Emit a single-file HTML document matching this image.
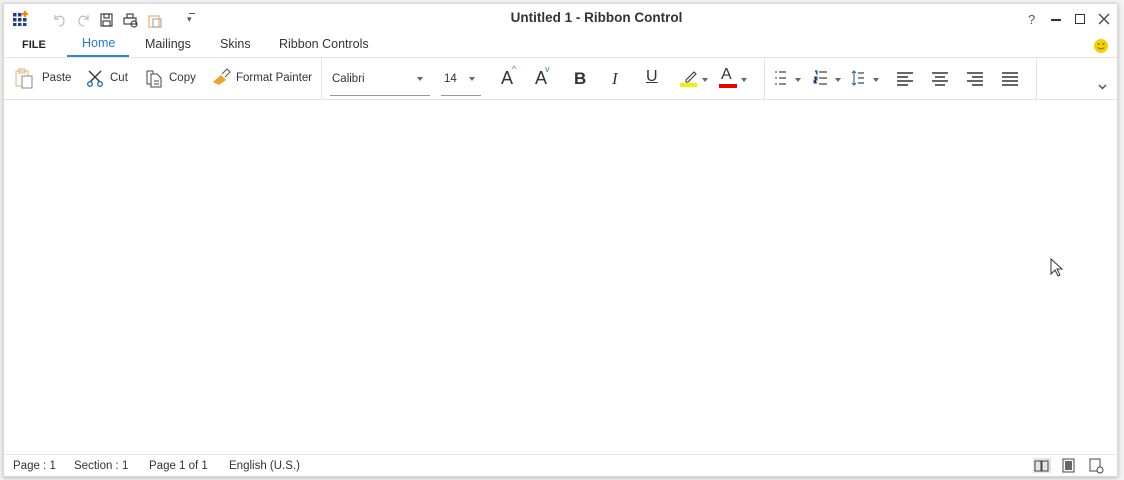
<!DOCTYPE html>
<html><head><style>
*{margin:0;padding:0;box-sizing:border-box}
body{width:1124px;height:480px;background:#f3f3f3;font-family:"Liberation Sans",sans-serif;font-size:11.5px;color:#333;position:relative;overflow:hidden}
.win{position:absolute;left:3px;top:3px;width:1115px;height:474px;background:#fff;border:1px solid #d8d8d8;box-shadow:0 1px 4px rgba(0,0,0,.25)}
.a{position:absolute;white-space:nowrap}
.ico{position:absolute}
.ribbon{position:absolute;left:0;top:53px;width:1113px;height:43px;border-top:1px solid #e4e4e4;border-bottom:1px solid #e4e4e4}
.sep{position:absolute;top:0;width:1px;height:42px;background:#e6e6e6}
.dd{position:absolute;width:0;height:0;border-left:3px solid transparent;border-right:3px solid transparent;border-top:4px solid #666}
.status{position:absolute;left:0;top:450px;width:1113px;height:22px;border-top:1px solid #e8e8e8}
</style></head><body>
<div class="win">
<svg class="ico" style="left:9px;top:7px" width="16" height="15"><g fill="#1e3c8c"><rect x="0" y="2" width="3.5" height="3.5"/><rect x="5" y="2" width="3.5" height="3.5"/><rect x="0" y="7" width="3.5" height="3.5"/><rect x="5" y="7" width="3.5" height="3.5"/><rect x="10" y="7" width="3.5" height="3.5"/><rect x="0" y="12" width="3.5" height="3"/><rect x="5" y="12" width="3.5" height="3"/><rect x="10" y="12" width="3.5" height="3"/></g><path d="M12 0v6M9 3h6" stroke="#f08c00" stroke-width="2.2"/></svg>
<svg class="ico" style="left:48px;top:8px" width="110" height="16" fill="none" stroke="#bbb" stroke-width="1.2">
<path d="M3 3v4h4M3 7c2-4 9-4 9 2 0 3-2 5-5 5"/>
<path d="M36 3v4h-4M36 7c-2-4-9-4-9 2 0 3 2 5 5 5" />
<g stroke="#444"><rect x="49" y="2" width="11" height="12"/><rect x="52" y="2" width="5" height="4"/><rect x="51" y="9" width="7" height="5"/>
<rect x="72" y="6" width="12" height="6"/><rect x="75" y="2" width="6" height="4"/><circle cx="82" cy="12" r="3"/></g>
<g stroke="#e0b070"><rect x="97" y="4" width="10" height="11"/></g><rect x="101" y="7" width="8" height="8" stroke="#aaa"/>
</svg>
<div class="a" style="left:183px;top:10px;font-size:9px;color:#555">&#9662;</div>
<div class="a" style="left:185px;top:9px;width:6px;height:1px;background:#555"></div>
<div class="a" style="left:72px;width:1041px;top:6px;text-align:center;font-size:13.5px;font-weight:bold;color:#333">Untitled 1 - Ribbon Control</div>
<div class="a" style="left:1024px;top:8px;font-size:13px;color:#555">?</div>
<div class="a" style="left:1047px;top:15px;width:10px;height:2px;background:#333"></div>
<div class="a" style="left:1071px;top:10px;width:10px;height:10px;border:1.5px solid #333"></div>
<svg class="ico" style="left:1094px;top:9px" width="12" height="12"><path d="M1 1l10 10M11 1L1 11" stroke="#444" stroke-width="1.3"/></svg>
<div class="a" style="left:18px;top:35px;font-size:11px;font-weight:bold;color:#222">FILE</div>
<div class="a" style="left:78px;top:32px;font-size:12.5px;color:#1f7bd1">Home</div>
<div class="a" style="left:63px;top:51px;width:62px;height:2px;background:#2b87d3"></div>
<div class="a" style="left:141px;top:33px;font-size:12.5px">Mailings</div>
<div class="a" style="left:216px;top:33px;font-size:12.5px">Skins</div>
<div class="a" style="left:275px;top:33px;font-size:12.5px">Ribbon Controls</div>
<svg class="ico" style="left:1089px;top:34px" width="16" height="16"><circle cx="8" cy="8" r="7" fill="#f6d100"/><circle cx="5.5" cy="6" r="1" fill="#8a6a00"/><circle cx="10.5" cy="6" r="1" fill="#8a6a00"/><path d="M4.5 9.5q3.5 3 7 0" stroke="#8a6a00" fill="none"/></svg>
<div class="ribbon">
<svg class="ico" style="left:11px;top:10px" width="20" height="22" fill="none"><rect x="1" y="3" width="12" height="15" stroke="#e0b070"/><rect x="4" y="1" width="6" height="4" stroke="#e0b070"/><rect x="7" y="8" width="10" height="12" fill="#fff" stroke="#888"/></svg>
<div class="a" style="left:38px;top:14px">Paste</div>
<svg class="ico" style="left:82px;top:11px" width="18" height="18" fill="none" stroke-width="1.4"><path d="M3 2l11 11M15 2L4 13" stroke="#333"/><circle cx="4" cy="15" r="2.3" stroke="#1f6fc0"/><circle cx="14" cy="15" r="2.3" stroke="#1f6fc0"/></svg>
<div class="a" style="left:106px;top:14px">Cut</div>
<svg class="ico" style="left:140px;top:10px" width="20" height="20" fill="none" stroke="#444"><path d="M3 3h6v13H3z"/><path d="M7 6h6l4 4v9H7z" fill="#fff"/><path d="M10 13h5M10 16h5"/></svg>
<div class="a" style="left:165px;top:14px">Copy</div>
<svg class="ico" style="left:206px;top:9px" width="22" height="20"><path d="M3 15l8-7 5 5-7 5z" fill="#f0a030"/><path d="M12 7l5-5 3 3-5 5" stroke="#555" fill="none"/></svg>
<div class="a" style="left:232px;top:14px">Format Painter</div>
<div class="sep" style="left:317px"></div>
<div class="a" style="left:328px;top:15px">Calibri</div>
<div class="dd" style="left:413px;top:19px"></div>
<div class="a" style="left:326px;top:37px;width:100px;height:1px;background:#999"></div>
<div class="a" style="left:440px;top:15px">14</div>
<div class="dd" style="left:465px;top:19px"></div>
<div class="a" style="left:437px;top:37px;width:40px;height:1px;background:#999"></div>
<div class="a" style="left:497px;top:10px;font-size:18px">A</div>
<div class="a" style="left:508px;top:6px;font-size:9px;color:#2b87d3">^</div>
<div class="a" style="left:531px;top:10px;font-size:18px">A</div>
<div class="a" style="left:541px;top:6px;font-size:9px;color:#2b87d3">v</div>
<div class="a" style="left:570px;top:11px;font-size:17px;font-weight:bold">B</div>
<div class="a" style="left:608px;top:11px;font-size:17px;font-style:italic;font-family:'Liberation Serif',serif">I</div>
<div class="a" style="left:642px;top:10px;font-size:16px;text-decoration:underline">U</div>
<svg class="ico" style="left:676px;top:10px" width="18" height="20"><path d="M6 12l8-8 2 2-8 8H6z" fill="none" stroke="#333"/><rect x="0" y="15" width="17" height="4" fill="#f5f000"/></svg>
<div class="dd" style="left:698px;top:20px"></div>
<div class="a" style="left:717px;top:8px;font-size:16px">A</div>
<div class="a" style="left:715px;top:26px;width:18px;height:4px;background:#e00"></div>
<div class="dd" style="left:737px;top:20px"></div>
<div class="sep" style="left:760px"></div>
<svg class="ico" style="left:770px;top:12px" width="120" height="20" stroke-width="1.2">
<g stroke="#3a6aa8"><path d="M1 2h2M1 8h2M1 14h2"/></g><g stroke="#444"><path d="M5 2h7M5 8h7M5 14h7"/></g>
<g stroke="#3a6aa8"><path d="M41 1h2v4M40 7h3v3h-3v3h3M40 13h3"/></g><g stroke="#444"><path d="M45 2h8M45 8h8M45 14h8"/></g>
<g stroke="#3a6aa8" fill="none"><path d="M80 1v14M78 3l2-2 2 2M78 13l2 2 2-2"/></g><g stroke="#444"><path d="M84 3h6M84 8h6M84 13h6"/></g>
</svg>
<div class="dd" style="left:791px;top:20px"></div>
<div class="dd" style="left:831px;top:20px"></div>
<div class="dd" style="left:869px;top:20px"></div>
<svg class="ico" style="left:893px;top:14px" width="130" height="16" stroke="#333" stroke-width="1.4">
<path d="M0 1h16M0 5h11M0 9h16M0 13h11"/>
<path d="M35 1h16M38 5h10M35 9h16M38 13h10"/>
<path d="M70 1h16M75 5h11M70 9h16M75 13h11"/>
<path d="M105 1h16M105 5h16M105 9h16M105 13h16"/>
</svg>
<div class="sep" style="left:1032px"></div>
<svg class="ico" style="left:1094px;top:26px" width="9" height="6"><path d="M1 1l3.5 3.5L8 1" stroke="#555" stroke-width="1.5" fill="none"/></svg>
</div>
<svg class="ico" style="left:1046px;top:254px" width="14" height="20"><path d="M1 1v15l4-4 3 6 2-1-3-6h5z" fill="#fff" stroke="#333"/></svg>
<div class="status">
<div class="a" style="left:9px;top:5px">Page : 1</div>
<div class="a" style="left:70px;top:5px">Section : 1</div>
<div class="a" style="left:145px;top:5px">Page 1 of 1</div>
<div class="a" style="left:225px;top:5px">English (U.S.)</div>
<svg class="ico" style="left:1029px;top:3px" width="80" height="16" fill="none" stroke="#444">
<rect x="0" y="0" width="18" height="15" fill="#e4e4e4" stroke="none"/><path d="M2 3h6v10H2zM9 3h6v10H9z"/>
<rect x="30" y="1" width="11" height="13"/><rect x="32" y="3" width="7" height="9" fill="#666" stroke="none"/>
<rect x="57" y="1" width="10" height="12"/><circle cx="67" cy="12" r="3" fill="#fff"/>
</svg>
</div>
</div>
</body></html>
